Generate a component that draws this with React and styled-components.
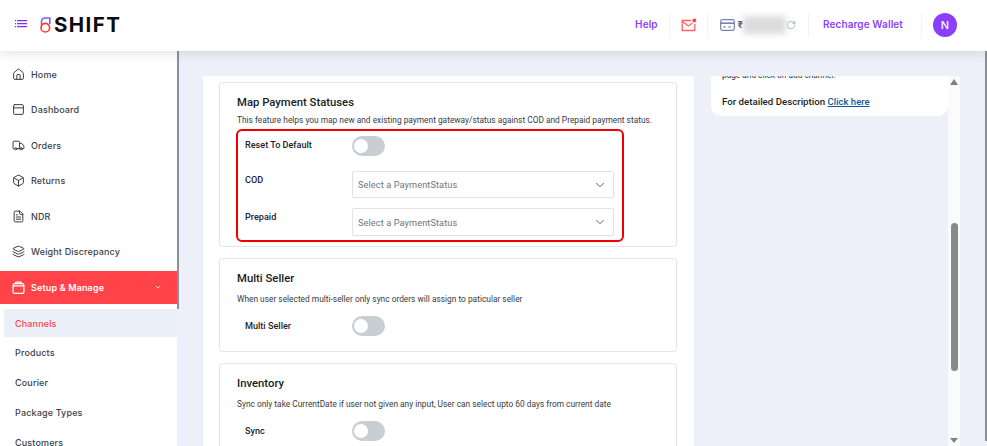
import React from "react";
import styled, { createGlobalStyle } from "styled-components";
import { Home, PanelTop, Truck, Box, FileText, Layers, ChevronDown, RotateCw } from "lucide-react";

const Global = createGlobalStyle`
  html, body { margin: 0; padding: 0; height: 100%; overflow: hidden; background: #edf0f8; }
  * { box-sizing: border-box; }
  #root { height: 100%; }
`;

const Page = styled.div`
  width: 987px; height: 446px; overflow: hidden; position: relative;
  display: grid; grid-template-rows: 51px 1fr; background: #edf0f8;
  font-family: Roboto, "Liberation Sans", sans-serif;
`;
const Header = styled.header`
  display: flex; align-items: center; background: #fff; position: relative; z-index: 3;
  box-shadow: 0 2px 10px rgba(60, 70, 110, .16); padding-left: 15px;
`;
const Burger = styled.svg`width: 12px; height: 8px; flex: none; margin-top: -4px;`;
const Logo = styled.div`display: flex; align-items: center; margin-left: 13px; margin-top: -1px;`;
const LogoMark = styled.svg`width: 11px; height: 16px; flex: none;`;
const LogoText = styled.span`
  font-family: Inter, sans-serif; font-weight: 700; font-size: 20.5px; letter-spacing: 1.4px;
  color: #0b0b10; margin-left: 3px; line-height: 20px;
`;
const HeaderRight = styled.div`display: flex; align-items: center; margin-left: auto; height: 100%; padding-right: 30px;`;
const HeaderLink = styled.span`
  font-family: Inter, sans-serif; font-weight: 600; font-size: 10px; color: #8a3ffc; white-space: nowrap;
  letter-spacing: .1px; margin-top: -1px;
`;
const Cell = styled.div`
  display: flex; align-items: center; height: 24px; margin-top: -2px;
  padding: 0 ${p => p.$pr ?? 0}px 0 ${p => p.$pl ?? 0}px;
  border-right: ${p => p.$last ? "none" : "1px solid #f1f2f5"};
`;
const Rupee = styled.span`font-size: 10px; font-weight: 700; color: #3a4058; margin-left: 3px;`;
const Blurred = styled.span`
  width: 43px; height: 18px; background: #dcdcdc; filter: blur(3px);
`;
const Avatar = styled.div`
  width: 24px; height: 24px; border-radius: 50%; background: #8a3ffc; color: #fff;
  font-family: Inter, sans-serif; font-size: 11px; font-weight: 500;
  display: flex; align-items: center; justify-content: center;
`;

const Body = styled.div`display: grid; grid-template-columns: 177px 1fr; min-height: 0; overflow: hidden;`;
const Sidebar = styled.aside`
  background: #fff; padding-top: 5.6px; overflow: hidden;
  font-family: Inter, sans-serif; font-size: 9px; font-weight: 500; color: #3c3f4a;
`;
const NavItem = styled.div`
  height: 35.5px; display: flex; align-items: center; gap: 6px; padding-left: 12px; letter-spacing: .15px;
  svg { width: 13px; height: 13px; flex: none; color: #33363f; }
`;
const NavActive = styled.div`
  height: 33px; margin-top: 1.4px; display: flex; align-items: center; gap: 6px; padding: 0 15px 0 12px;
  background: #ff4348; color: #fff; font-weight: 600; letter-spacing: .15px;
  svg { width: 13px; height: 13px; flex: none; }
  span { flex: 1; }
`;
const SubItem = styled.div`
  height: 30px; display: flex; align-items: center; padding-left: 15px;
  letter-spacing: .15px; color: #3c3f4a;
`;
const ActiveSubItem = styled.div`
  height: 28px; display: flex; align-items: center; padding: 1px 0 0 11px;
  margin: 5px 0 1px 4px; letter-spacing: .15px; background: #ebeff7; color: #ff4348;
`;

const Main = styled.main`
  display: flex; align-items: flex-start; padding: 25px 0 0 26px; min-width: 0; overflow: hidden; position: relative;
  &::before { content: ""; position: absolute; top: 0; left: 0; width: 1.5px; height: 258px; background: #8b8f97; }
  &::after { content: ""; position: absolute; top: 0; right: 0; bottom: 5px; width: 2px; background: #8b8f97; }
`;
const Panel = styled.div`
  width: 491px; height: 370px; background: #fff; padding: 6px 17px 0 16px; flex: none;
  display: flex; flex-direction: column; gap: 11px; overflow: hidden;
`;
const Card = styled.section`
  border: 1px solid #e3e5e9; border-radius: 3px; background: #fff; padding: 12px 17px 0 17px; flex: none;
  height: ${p => p.$h}px;
`;
const CardTitle = styled.h3`
  margin: 0; font-size: 11.3px; font-weight: 500; color: #191c24; line-height: 16px;
`;
const CardDesc = styled.p`
  margin: ${p => p.$mt ?? 4}px 0 0; font-size: 8.35px; color: #373b44; line-height: 16px; white-space: nowrap;
`;
const Highlight = styled.div`
  margin: 1px 0 0 -1px; width: 388px; height: 113px; border: 2px solid #ee0000; border-radius: 6px;
  padding: 5px 8px 0 7px; display: flex; flex-direction: column;
`;
const Row = styled.div`display: flex; align-items: ${p => p.$top ? "flex-start" : "center"}; height: ${p => p.$h}px; margin-top: ${p => p.$mt || 0}px;`;
const Label = styled.label`
  width: 107px; flex: none; font-size: 9.1px; font-weight: 500; color: #1f222b; line-height: 16px;
  padding-top: ${p => p.$pt || 0}px;
`;
const PlainRow = styled(Row)`padding-left: 8px;`;
const Toggle = styled.span`
  width: 33px; height: 20px; border-radius: 10px; background: #c9cdd4; display: flex; align-items: center; padding-left: 2px; flex: none;
  &::before { content: ""; width: 14px; height: 14px; border-radius: 50%; background: #fff; }
`;
const Select = styled.div`
  width: 262px; height: ${p => p.$h}px; border: 1px solid #dfe2e7; border-radius: 2px; background: #fff;
  display: flex; align-items: center; justify-content: space-between; padding: 0 6px 0 5px;
  font-size: 9.2px; color: #6d7580; letter-spacing: .1px;
  svg { width: 14px; height: 14px; color: #555b66; }
`;

const Side = styled.div`width: 237px; margin-left: 17px; flex: none;`;
const InfoCard = styled.div`
  height: 40px; background: #fff; border-radius: 0 0 10px 10px; padding: 0 11px; overflow: hidden;
`;
const Clipped = styled.div`
  height: 4px; overflow: hidden; font-size: 8.3px; color: #33363e; white-space: nowrap; line-height: 10px;
  span { display: block; margin-top: -6px; }
`;
const InfoLine = styled.div`
  margin-top: 15px; font-size: 9.7px; font-weight: 500; color: #1c1f26; line-height: 14px; white-space: nowrap;
`;
const InfoLink = styled.a`color: #0e5b98; text-decoration: underline; font-size: 9.5px;`;
const ScrollTrack = styled.div`
  width: 12px; height: 370px; background: #fbfbfb; flex: none; display: flex; flex-direction: column; align-items: center;
`;
const ArrowUp = styled.i`
  width: 0; height: 0; border-left: 4px solid transparent; border-right: 4px solid transparent;
  border-bottom: 6px solid #808080; margin-top: 3px;
`;
const Thumb = styled.div`width: 7px; height: 148px; background: #8a8a8a; border-radius: 4px; margin-top: 138px;`;
const ArrowDown = styled.i`
  width: 0; height: 0; border-left: 4px solid transparent; border-right: 4px solid transparent;
  border-top: 5px solid #808080; margin-top: 67px;
`;

const navItems = [
  ["Home", Home], ["Dashboard", PanelTop], ["Orders", Truck],
  ["Returns", Box], ["NDR", FileText], ["Weight Discrepancy", Layers],
];
const subItems = ["Products", "Courier", "Package Types", "Customers"];

export default function App() {
  return (
    <Page>
      <Global />
      <Header>
        <Burger viewBox="0 0 12 8" fill="none" stroke="#7b2cff" strokeWidth="1.2">
          <path d="M2 .6h10M2 3.6h10M2 6.6h10" />
          <path d="M0 .6h1M0 3.6h1M0 6.6h1" />
        </Burger>
        <Logo>
          <LogoMark viewBox="0 0 11 16" fill="none" strokeWidth="1.6">
            <path d="M1.5 8V4.5C1.5 2.5 3 1 5 1H9.8V7" stroke="#7a5cff" />
            <circle cx="5.3" cy="10.7" r="4.3" stroke="#ff3b30" />
          </LogoMark>
          <LogoText>SHIFT</LogoText>
        </Logo>
        <HeaderRight>
          <Cell $pr={11}><HeaderLink>Help</HeaderLink></Cell>
          <Cell $pl={11} $pr={10}>
            <svg width="16" height="14" viewBox="0 0 16 14" fill="none" stroke="#ff6064" strokeWidth="1.3">
              <path d="M10 2.5H1.2v10h12.6V6" />
              <path d="M1.5 3.5 7.5 8 11.5 5" />
              <circle cx="13.3" cy="2.4" r="2" fill="#ff4348" stroke="none" />
            </svg>
          </Cell>
          <Cell $pl={12} $pr={12}>
            <svg width="15" height="12" viewBox="0 0 15 12" fill="none" stroke="#7484a8" strokeWidth="1.2">
              <rect x=".7" y=".7" width="13.6" height="10.6" rx="1.5" />
              <path d="M.7 4.2h13.6" strokeWidth="1.6" />
              <path d="M3 8h3M8 8h3" />
            </svg>
            <Rupee>₹</Rupee>
            <Blurred />
            <RotateCw size={10} color="#8794b0" strokeWidth={1.6} />
          </Cell>
          <Cell $pl={14} $pr={18}><HeaderLink>Recharge Wallet</HeaderLink></Cell>
          <Cell $pl={11} $last><Avatar>N</Avatar></Cell>
        </HeaderRight>
      </Header>
      <Body>
        <Sidebar>
          {navItems.map(([label, Icon]) => (
            <NavItem key={label}><Icon strokeWidth={1.8} />{label}</NavItem>
          ))}
          <NavActive>
            <svg viewBox="0 0 12 12" fill="none" stroke="#fff" strokeWidth="1.2">
              <rect x="1" y="2.5" width="10" height="9" rx="1.6" />
              <path d="M3 2.5V2c0-.6.5-1 1-1h4c.5 0 1 .4 1 1v.5M1 4.5h10" />
            </svg>
            <span>Setup &amp; Manage</span>
            <ChevronDown strokeWidth={2.4} style={{ width: 8, height: 8 }} />
          </NavActive>
          <ActiveSubItem>Channels</ActiveSubItem>
          {subItems.map(s => <SubItem key={s}>{s}</SubItem>)}
        </Sidebar>
        <Main>
          <Panel>
            <Card $h={165}>
              <CardTitle>Map Payment Statuses</CardTitle>
              <CardDesc $mt={1}>This feature helps you map new and existing payment gateway/status against COD and Prepaid payment status.</CardDesc>
              <Highlight>
                <Row $h={20} $top><Label $pt={1}>Reset To Default</Label><Toggle /></Row>
                <Row $h={27} $mt={15} $top>
                  <Label $pt={1}>COD</Label>
                  <Select $h={27}>Select a PaymentStatus<ChevronDown strokeWidth={1.6} /></Select>
                </Row>
                <Row $h={28} $mt={10} $top>
                  <Label $pt={1}>Prepaid</Label>
                  <Select $h={28}>Select a PaymentStatus<ChevronDown strokeWidth={1.6} /></Select>
                </Row>
              </Highlight>
            </Card>
            <Card $h={94}>
              <CardTitle>Multi Seller</CardTitle>
              <CardDesc>When user selected multi-seller only sync orders will assign to paticular seller</CardDesc>
              <PlainRow $h={20} $mt={9}><Label>Multi Seller</Label><Toggle /></PlainRow>
            </Card>
            <Card $h={94}>
              <CardTitle>Inventory</CardTitle>
              <CardDesc>Sync only take CurrentDate if user not given any input, User can select upto 60 days from current date</CardDesc>
              <PlainRow $h={20} $mt={9}><Label>Sync</Label><Toggle /></PlainRow>
            </Card>
          </Panel>
          <Side>
            <InfoCard>
              <Clipped><span>page and click on add channel.</span></Clipped>
              <InfoLine>For detailed Description <InfoLink>Click here</InfoLink></InfoLine>
            </InfoCard>
          </Side>
          <ScrollTrack>
            <ArrowUp />
            <Thumb />
            <ArrowDown />
          </ScrollTrack>
        </Main>
      </Body>
    </Page>
  );
}
